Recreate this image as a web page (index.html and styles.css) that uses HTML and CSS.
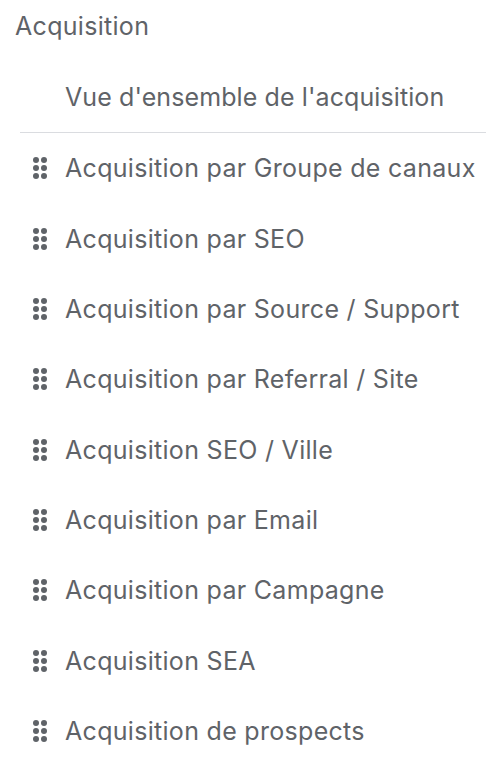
FILE: index.html
```html
<!DOCTYPE html>
<html lang="fr">
<head>
<meta charset="utf-8">
<link rel="stylesheet" href="styles.css">
</head>
<body>
<div class="panel">
  <div class="title">Acquisition</div>
  <div class="overview">Vue d'ensemble de l'acquisition</div>
  <div class="divider"></div>
  <ul class="list">
    <li class="item"><span class="grip"><i></i><i></i><i></i><i></i><i></i><i></i></span><span class="label">Acquisition par Groupe de canaux</span></li>
    <li class="item"><span class="grip"><i></i><i></i><i></i><i></i><i></i><i></i></span><span class="label">Acquisition par SEO</span></li>
    <li class="item"><span class="grip"><i></i><i></i><i></i><i></i><i></i><i></i></span><span class="label">Acquisition par Source / Support</span></li>
    <li class="item"><span class="grip"><i></i><i></i><i></i><i></i><i></i><i></i></span><span class="label">Acquisition par Referral / Site</span></li>
    <li class="item"><span class="grip"><i></i><i></i><i></i><i></i><i></i><i></i></span><span class="label">Acquisition SEO / Ville</span></li>
    <li class="item"><span class="grip"><i></i><i></i><i></i><i></i><i></i><i></i></span><span class="label">Acquisition par Email</span></li>
    <li class="item"><span class="grip"><i></i><i></i><i></i><i></i><i></i><i></i></span><span class="label">Acquisition par Campagne</span></li>
    <li class="item"><span class="grip"><i></i><i></i><i></i><i></i><i></i><i></i></span><span class="label">Acquisition SEA</span></li>
    <li class="item"><span class="grip"><i></i><i></i><i></i><i></i><i></i><i></i></span><span class="label">Acquisition de prospects</span></li>
  </ul>
</div>
</body>
</html>
```
FILE: styles.css
```css
html, body {
  margin: 0;
  padding: 0;
  background: #ffffff;
}
body {
  font-family: Inter, Roboto, "Liberation Sans", sans-serif;
  color: #5f6368;
  width: 486px;
  height: 758px;
  overflow: hidden;
  letter-spacing: 0.3px;
}
.panel {
  display: flex;
  flex-direction: column;
}
.title {
  font-size: 25px;
  line-height: 52px;
  padding-left: 15px;
}
.overview {
  margin-top: 10px;
  height: 70px;
  display: flex;
  align-items: center;
  padding-left: 65px;
  font-size: 25px;
  letter-spacing: 0.1px;
}
.divider {
  height: 1px;
  background: #dadce0;
  margin-left: 20px;
}
.list {
  list-style: none;
  margin: 0;
  padding: 0;
}
.item {
  height: 70.375px;
  display: flex;
  align-items: center;
  padding-left: 33px;
  gap: 18px;
  font-size: 25px;
  white-space: nowrap;
}
.grip {
  display: grid;
  grid-template-columns: 6px 6px;
  grid-auto-rows: 6px;
  gap: 2px;
}
.grip i {
  display: block;
  width: 6px;
  height: 6px;
  border-radius: 50%;
  background: #5f6368;
}
```
